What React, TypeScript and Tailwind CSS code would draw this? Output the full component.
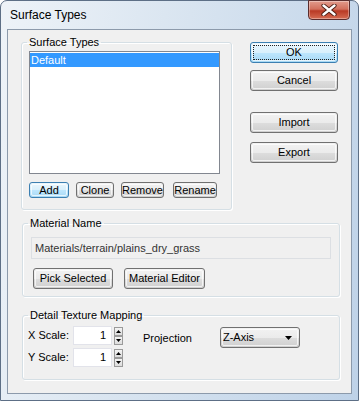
import React from "react";

const FONT = { fontFamily: '"Liberation Sans", Arial, sans-serif' };

function Btn({
  label,
  className = "",
  primary = false,
  focus = false,
}: {
  label: string;
  className?: string;
  primary?: boolean;
  focus?: boolean;
}) {
  return (
    <button
      className={
        "relative flex items-center justify-center rounded-[3px] border text-[11px] leading-none text-black " +
        (primary
          ? "border-[#3c7fb1] bg-[linear-gradient(#eaf6fd_0%,#d9f0fc_50%,#bee6fd_51%,#a7d9f5_100%)] "
          : "border-[#707070] bg-[linear-gradient(#f2f2f2_0%,#ebebeb_50%,#dddddd_51%,#cfcfcf_100%)] ") +
        className
      }
    >
      <span className="absolute inset-[1px] rounded-[2px] border border-white/70" />
      {focus && <span className="absolute inset-[2px] border border-dotted border-[#222]" />}
      <span className="relative">{label}</span>
    </button>
  );
}

function Group({
  title,
  className = "",
  children,
}: {
  title: string;
  className?: string;
  children: React.ReactNode;
}) {
  return (
    <fieldset
      className={
        "rounded-[3px] border border-[#d5dfe5] shadow-[inset_1px_1px_0_#fff,1px_1px_0_#fff] " + className
      }
    >
      <legend className="ml-[5px] px-[2px] text-[11px] leading-[13px] text-black">{title}</legend>
      {children}
    </fieldset>
  );
}

function Spin() {
  const arrow = (up: boolean) => (
    <span className="flex h-[9px] w-[9px] items-center justify-center border border-[#9a9a9a] bg-[linear-gradient(#f4f4f4,#dcdcdc)]">
      <svg width="5" height="3" viewBox="0 0 5 3">
        <path d={up ? "M0 3 L2.5 0 L5 3 Z" : "M0 0 L2.5 3 L5 0 Z"} fill="#000" />
      </svg>
    </span>
  );
  return (
    <div className="ml-[2px] flex flex-col">
      {arrow(true)}
      {arrow(false)}
    </div>
  );
}

function NumField({ value }: { value: string }) {
  return (
    <div className="flex items-center">
      <div className="flex h-[19px] w-[39px] items-center justify-end border border-[#e2e3ea] bg-white pr-[5px] text-[11px] text-black">
        {value}
      </div>
      <Spin />
    </div>
  );
}

export default function App() {
  return (
    <div style={FONT} className="h-[401px] w-[359px] overflow-hidden bg-white">
      <div className="relative flex h-[401px] w-[359px] flex-col rounded-t-[7px] border border-[#5d6f86] bg-[linear-gradient(100deg,#eef3f8_0%,#d8e4f0_45%,#bed2e8_100%)] px-[6px] pb-[6px]">
        {/* title bar */}
        <div className="flex h-[28px] items-start pl-[3px] pt-[6px]">
          <span className="text-[12px] leading-[16px] text-black">Surface Types</span>
        </div>
        <div className="absolute right-[8px] top-[-1px] flex h-[20px] w-[42px] items-center justify-center rounded-b-[4px] border border-[#5a2d2d] bg-[linear-gradient(#e29b8c_0%,#d2705d_45%,#b93a25_55%,#d56c52_100%)] shadow-[inset_0_0_0_1px_rgba(255,255,255,0.35)]">
          <svg width="16" height="12" viewBox="0 0 16 12">
            <path d="M2.5 1.5 L13.5 10.5 M13.5 1.5 L2.5 10.5" stroke="#4a1a10" strokeWidth="4.2" strokeLinecap="round" />
            <path d="M2.5 1.5 L13.5 10.5 M13.5 1.5 L2.5 10.5" stroke="#ffffff" strokeWidth="2.4" strokeLinecap="round" />
          </svg>
        </div>

        {/* client area */}
        <div className="flex h-[365px] flex-col border border-[#8c9aab] bg-[#f0f0f0] pl-[13px]">
          <div className="mt-[6px] flex">
            <Group title="Surface Types" className="h-[174px] w-[211px]">
              <div className="px-[7px]">
                <div className="mt-[2px] h-[123px] w-[191px] border border-[#828790] bg-white pt-[1px]">
                  <div className="flex h-[14px] items-center bg-[#3399ff] pl-[1px] text-[11px] text-white">Default</div>
                </div>
                <div className="mt-[8px] flex">
                  <Btn label="Add" primary className="h-[16px] w-[40px]" />
                  <Btn label="Clone" className="ml-[7px] h-[16px] w-[38px]" />
                  <Btn label="Remove" className="ml-[7px] h-[16px] w-[43px]" />
                  <Btn label="Rename" className="ml-[9px] h-[16px] w-[44px]" />
                </div>
              </div>
            </Group>
            <div className="ml-[18px] mt-[6px] flex flex-col">
              <Btn label="OK" primary focus className="h-[21px] w-[88px]" />
              <Btn label="Cancel" className="mt-[7px] h-[21px] w-[88px]" />
              <Btn label="Import" className="mt-[21px] h-[21px] w-[88px]" />
              <Btn label="Export" className="mt-[9px] h-[21px] w-[88px]" />
            </div>
          </div>

          <Group title="Material Name" className="ml-[1px] mt-[7px] h-[80px] w-[318px]">
            <div className="px-[8px]">
              <div className="mt-[7px] flex h-[22px] w-[300px] items-center border border-[#dcdfe3] bg-[#f0f0f0] pl-[3px] text-[11px] text-[#333]">
                Materials/terrain/plains_dry_grass
              </div>
              <div className="mt-[9px] flex">
                <Btn label="Pick Selected" className="ml-[2px] h-[21px] w-[80px]" />
                <Btn label="Material Editor" className="ml-[11px] h-[21px] w-[81px]" />
              </div>
            </div>
          </Group>

          <Group title="Detail Texture Mapping" className="ml-[1px] mt-[12px] h-[71px] w-[318px]">
            <div className="mt-[4px] flex items-start pl-[5px]">
              <div className="flex flex-col gap-[3px]">
                <div className="flex items-center">
                  <span className="w-[45px] text-[11px] text-black">X Scale:</span>
                  <NumField value="1" />
                </div>
                <div className="flex items-center">
                  <span className="w-[45px] text-[11px] text-black">Y Scale:</span>
                  <NumField value="1" />
                </div>
              </div>
              <span className="ml-[20px] mt-[4px] text-[11px] text-black">Projection</span>
              <div className="relative ml-[28px] mt-[1px] flex h-[21px] w-[80px] items-center rounded-[3px] border border-[#707070] bg-[linear-gradient(#f2f2f2_0%,#ebebeb_50%,#dddddd_51%,#cfcfcf_100%)] pl-[2px] text-[11px] text-black">
                <span className="absolute inset-[1px] rounded-[2px] border border-white/70" />
                <span className="relative">Z-Axis</span>
                <svg className="absolute right-[7px] top-[8px]" width="7" height="4" viewBox="0 0 7 4">
                  <path d="M0 0 L7 0 L3.5 4 Z" fill="#000" />
                </svg>
              </div>
            </div>
          </Group>
        </div>
      </div>
    </div>
  );
}
